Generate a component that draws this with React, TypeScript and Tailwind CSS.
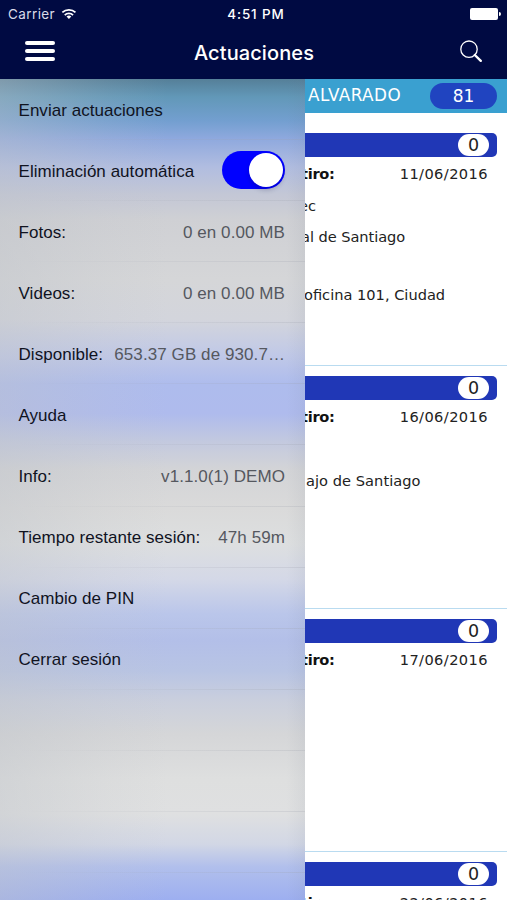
import React from 'react';

type MenuItem = { label: string; value?: string; toggle?: boolean };
type Card = { date: string; lines: { text: string; className: string }[] };

const menu: MenuItem[] = [
  { label: 'Enviar actuaciones' },
  { label: 'Eliminación automática', toggle: true },
  { label: 'Fotos:', value: '0 en 0.00 MB' },
  { label: 'Videos:', value: '0 en 0.00 MB' },
  { label: 'Disponible:', value: '653.37 GB de 930.7…' },
  { label: 'Ayuda' },
  { label: 'Info:', value: 'v1.1.0(1) DEMO' },
  { label: 'Tiempo restante sesión:', value: '47h 59m' },
  { label: 'Cambio de PIN' },
  { label: 'Cerrar sesión' },
  { label: '' },
  { label: '' },
  { label: '' },
  { label: '' },
];

const cards: Card[] = [
  {
    date: '11/06/2016',
    lines: [
      { text: 'ec', className: 'mt-[12px] -ml-[6px]' },
      { text: 'al de Santiago', className: 'mt-[11px] -ml-[4px] tracking-[-0.05px]' },
      { text: 'oficina 101, Ciudad', className: 'mt-[38px] -ml-[1px]' },
    ],
  },
  { date: '16/06/2016', lines: [{ text: 'ajo de Santiago', className: 'mt-[44px] ml-px tracking-[0.05px]' }] },
  { date: '17/06/2016', lines: [] },
  { date: '22/06/2016', lines: [] },
];

function Header() {
  return (
    <header className="h-[79px] shrink-0 bg-[#000a42] text-white">
      <div className="grid h-[28px] grid-cols-3 items-center pl-[8px] pr-[6px] text-[14px]">
        <div className="flex items-center gap-[6px]">
          <span className="font-['Inter'] text-[13.5px] tracking-[0.4px] text-[#d9dbe8]">Carrier</span>
          <svg width="16" height="12" viewBox="0 0 17 13" fill="none" stroke="white" strokeWidth="1.9">
            <path d="M1.3 4.8a10.2 10.2 0 0 1 14.2 0M3.9 7.6a6.4 6.4 0 0 1 9 0" />
            <path d="M5.8 9.3a3.8 3.8 0 0 1 5.2 0L8.4 12z" fill="white" stroke="none" />
          </svg>
        </div>
        <span className="whitespace-nowrap pl-[3px] pt-px text-center font-['Inter'] text-[13.4px] font-medium tracking-[0.9px]">4:51 PM</span>
        <div className="flex items-center justify-end">
          <div className="h-[12px] w-[28px] rounded-[2px] bg-white" />
          <div className="ml-px h-[4px] w-[2px] rounded-r-full bg-white" />
        </div>
      </div>
      <div className="grid h-[49px] grid-cols-[100px_1fr_100px] items-center">
        <div className="flex flex-col gap-[4px] pb-[3px] pl-[25px]">
          <div className="h-[4px] w-[30px] rounded-full bg-white" />
          <div className="h-[4px] w-[30px] rounded-full bg-white" />
          <div className="h-[4px] w-[30px] rounded-full bg-white" />
        </div>
        <h1 className="pl-px text-center font-['Inter'] text-[20px] font-medium tracking-[0.1px]">Actuaciones</h1>
        <svg className="mb-[3px] ml-[52px]" width="24" height="24" viewBox="0 0 24 24" fill="none" stroke="white">
          <circle cx="10" cy="10.2" r="8.2" strokeWidth="1.3" />
          <path d="m15.8 16 6 5.8" strokeWidth="2.4" strokeLinecap="round" />
        </svg>
      </div>
    </header>
  );
}

function SideMenu() {
  return (
    <nav className="h-full w-[305px] shrink-0 overflow-hidden bg-[linear-gradient(90deg,rgba(190,194,200,0.4)_0%,rgba(192,195,200,0.12)_35%,transparent_55%,transparent_94%,rgba(100,110,130,0.08)_100%),linear-gradient(180deg,#557f98_0px,#6298b8_18px,#739fd0_42px,#8fa9de_60px,#b1bde0_88px,#c3c7d6_115px,#cfd0d4_140px,#d5d6d8_200px,#d3d5dc_240px,#c1c9e7_275px,#aebced_305px,#afbbed_335px,#c3c9df_363px,#d3d4d7_390px,#dadada_430px,#dddfe0_465px,#d4d8e7_500px,#bac6ea_535px,#b3bfe8_562px,#b8c4e4_592px,#cacfdd_622px,#d5d6d8_655px,#dedfdf_700px,#dfe0e1_735px,#d2d7e5_765px,#b1bfec_788px,#9daff0_821px)]">
      {menu.map((item, i) => (
        <div key={i} className="flex h-[61.08px] flex-col pl-[18.5px]">
          <div className="flex flex-1 items-center justify-between whitespace-nowrap pr-[20px] pt-[2.8px] text-[17px]">
            <span className="tracking-[0.04px] text-[#10131f]">{item.label}</span>
            {item.value && <span className="tracking-[0.08px] text-[#55585f]">{item.value}</span>}
            {item.toggle && (
              <span className="mb-[3px] flex h-[38px] w-[63px] items-center justify-end rounded-full bg-[#0000ff] pr-[2px]">
                <span className="size-[34px] rounded-full bg-white shadow-[0_3px_5px_rgba(0,0,50,0.2)]" />
              </span>
            )}
          </div>
          <div className="h-px bg-gradient-to-r from-transparent to-[#9da1ac]/25" />
        </div>
      ))}
    </nav>
  );
}

function Record({ card }: { card: Card }) {
  return (
    <article className="flex h-[243px] shrink-0 flex-col border-b border-[#b9dbf0] pt-[10px] text-[14.6px] leading-[20px] text-[#222222]">
      <div className="mr-[10px] flex h-[24px] shrink-0 items-center justify-end rounded-r-[5px] bg-[#2037b6] pr-[8px]">
        <span className="flex h-[22px] w-[31px] items-center justify-center rounded-full bg-white text-[17.5px] text-[#222222]">0</span>
      </div>
      <div className="mt-[7px] flex shrink-0 justify-between pr-[19px]">
        <span className="-ml-[4px] text-[14.6px] font-bold tracking-[-0.3px] text-[#111111]">tiro:</span>
        <span className="tracking-[0.42px]">{card.date}</span>
      </div>
      {card.lines.map((line) => (
        <p key={line.text} className={'shrink-0 whitespace-nowrap ' + line.className}>{line.text}</p>
      ))}
    </article>
  );
}

export default function App() {
  return (
    <div className="flex h-[900px] w-[507px] flex-col overflow-hidden bg-white font-['Liberation_Sans',Arial,sans-serif]">
      <Header />
      <div className="flex min-h-0 flex-1">
        <SideMenu />
        <main className="flex min-w-0 flex-1 flex-col overflow-hidden bg-white font-['DejaVu_Sans',Verdana,sans-serif]">
          <div className="mb-[10px] flex h-[34px] shrink-0 items-center justify-between bg-[#3aa0d0] pl-[3px] pr-[10px] text-white">
            <span className="text-[16.8px] tracking-[0.45px]">ALVARADO</span>
            <span className="flex h-[26px] w-[67px] items-center justify-center rounded-full bg-[#2044c0] pt-px text-[17px]">81</span>
          </div>
          {cards.map((card) => (
            <Record key={card.date} card={card} />
          ))}
        </main>
      </div>
    </div>
  );
}
